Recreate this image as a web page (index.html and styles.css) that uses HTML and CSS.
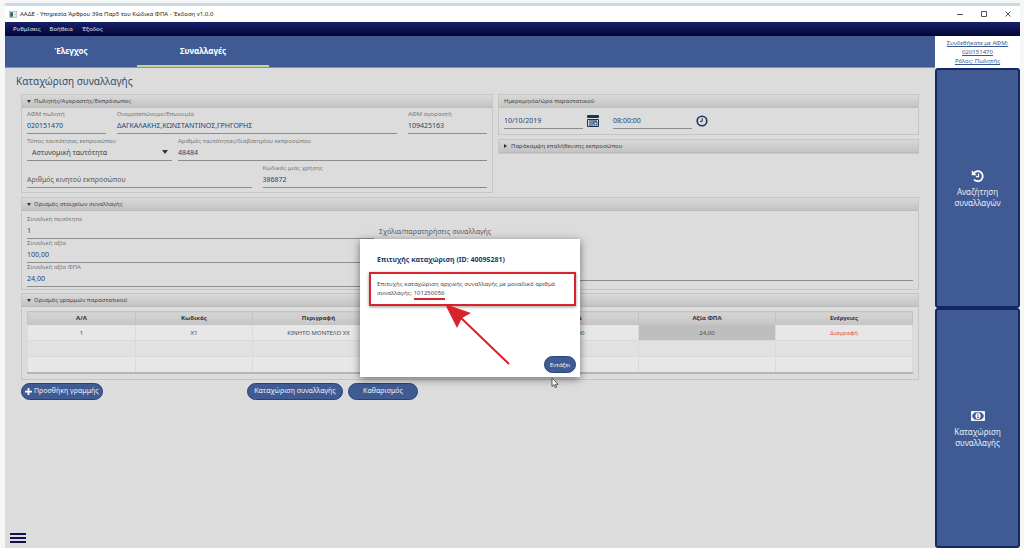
FILE: index.html
```html
<!DOCTYPE html>
<html lang="el">
<head>
<meta charset="utf-8">
<meta name="viewport" content="width=device-width, initial-scale=1">
<title>ΑΑΔΕ - Υπηρεσία Άρθρου 39α</title>
<link rel="stylesheet" href="styles.css">
</head>
<body>
<div class="window">
  <header class="titlebar">
    <svg class="app-icon" viewBox="0 0 14 12" aria-hidden="true"><rect x=".5" y=".5" width="13" height="11" fill="#eef3f4" stroke="#9aa9b2"/><rect x="2" y="2" width="5" height="8" fill="#2d6873"/><path d="M9 3h3M9 6h3M9 9h3" stroke="#a9b8be"/></svg>
    <span class="titlebar-text">ΑΑΔΕ - Υπηρεσία Άρθρου 39α Παρ5 του Κώδικα ΦΠΑ - Έκδοση v1.0.0</span>
    <button class="win-btn" aria-label="Ελαχιστοποίηση"><svg viewBox="0 0 8 8"><path d="M1 4.500h6"/></svg></button>
    <button class="win-btn" aria-label="Μεγιστοποίηση"><svg viewBox="0 0 8 8"><path d="M1.500 1.500h5v5h-5z"/></svg></button>
    <button class="win-btn" aria-label="Κλείσιμο"><svg viewBox="0 0 8 8"><path d="M1.500 1.500l5 5M6.500 1.500l-5 5"/></svg></button>
  </header>
  <nav class="menubar">
    <button>Ρυθμίσεις</button>
    <button>Βοήθεια</button>
    <button>Έξοδος</button>
  </nav>
  <div class="layout">
    <div class="workspace">
      <nav class="tabs">
        <button class="tab">Έλεγχος</button>
        <button class="tab tab-active">Συναλλαγές</button>
      </nav>
      <main class="main">
        <h1 class="page-title">Καταχώριση συναλλαγής</h1>
        <div class="panels">
          <div class="top-panels">
            <details class="panel" open>
              <summary class="panel-head">Πωλητής/Αγοραστής/Εκπρόσωπος</summary>
              <div class="panel-body party">
                <div class="row row-names">
                  <label class="field"><span>ΑΦΜ πωλητή</span><input type="text" value="020151470"></label>
                  <label class="field"><span>Ονοματεπώνυμο/Επωνυμία</span><input type="text" value="ΔΑΓΚΑΛΑΚΗΣ,ΚΩΝΣΤΑΝΤΙΝΟΣ,ΓΡΗΓΟΡΗΣ"></label>
                  <label class="field"><span>ΑΦΜ αγοραστή</span><input type="text" value="109425163"></label>
                </div>
                <div class="row row-identity">
                  <label class="field field-select"><span>Τύπος ταυτότητας εκπροσώπου</span><select><option>Αστυνομική ταυτότητα</option></select></label>
                  <label class="field"><span>Αριθμός ταυτότητας/διαβατηρίου εκπροσώπου</span><input type="text" value="48484"></label>
                </div>
                <div class="row row-phone">
                  <label class="field"><span></span><input type="text" aria-label="Αριθμός κινητού εκπροσώπου" placeholder="Αριθμός κινητού εκπροσώπου"></label>
                  <label class="field"><span>Κωδικός μιας χρήσης</span><input type="text" value="386872"></label>
                </div>
              </div>
            </details>
            <div class="side-panels">
              <section class="panel">
                <h2 class="panel-head">Ημερομηνία/ώρα παραστατικού</h2>
                <div class="panel-body datetime">
                  <input class="line-input" type="text" aria-label="Ημερομηνία" value="10/10/2019">
                  <button class="icon-btn" aria-label="Ημερολόγιο"><svg viewBox="0 0 12 12"><rect x="0" y="0" width="12" height="3" rx="1" fill="#17365c"/><path d="M.5 4.500h11v7H.500z" fill="#dcdcdc" stroke="#17365c"/><path d="M2 6h8M2 8h5M2 10h4" stroke="#17365c"/><rect x="7" y="7" width="3" height="3" fill="none" stroke="#17365c" stroke-width=".8"/></svg></button>
                  <input class="line-input" type="text" aria-label="Ώρα" value="08:00:00">
                  <button class="icon-btn" aria-label="Ρολόι"><svg viewBox="0 0 12 12"><circle cx="6" cy="6" r="4.800" fill="none" stroke="#17365c" stroke-width="1.600"/><path d="M6.200 3.200v3.200H4" fill="none" stroke="#17365c"/></svg></button>
                </div>
              </section>
              <details class="panel">
                <summary class="panel-head">Παράκαμψη επαλήθευσης εκπροσώπου</summary>
              </details>
            </div>
          </div>
          <details class="panel" open>
            <summary class="panel-head">Ορισμός στοιχείων συναλλαγής</summary>
            <div class="panel-body amounts">
              <div class="amount-fields">
                <label class="field"><span>Συνολική ποσότητα</span><input type="text" value="1"></label>
                <label class="field"><span>Συνολική αξία</span><input type="text" value="100,00"></label>
                <label class="field"><span>Συνολική αξία ΦΠΑ</span><input type="text" value="24,00"></label>
              </div>
              <textarea class="notes" aria-label="Σχόλια/παρατηρήσεις συναλλαγής" placeholder="Σχόλια/παρατηρήσεις συναλλαγής"></textarea>
            </div>
          </details>
          <details class="panel" open>
            <summary class="panel-head">Ορισμός γραμμών παραστατικού</summary>
            <div class="panel-body lines-body">
              <table class="lines">
                <colgroup><col class="col-no"><col class="col-code"><col class="col-desc"><col class="col-qty"><col class="col-value"><col class="col-vat"><col class="col-actions"></colgroup>
                <thead><tr><th>Α/Α</th><th>Κωδικός</th><th>Περιγραφή</th><th>Ποσότητα</th><th>Αξία</th><th>Αξία ΦΠΑ</th><th>Ενέργειες</th></tr></thead>
                <tbody>
                  <tr><td>1</td><td>Χ1</td><td>ΚΙΝΗΤΟ ΜΟΝΤΕΛΟ ΧΧ</td><td>1</td><td>100,00</td><td class="selected">24,00</td><td><a class="delete" href="#">Διαγραφή</a></td></tr>
                  <tr><td></td><td></td><td></td><td></td><td></td><td></td><td></td></tr>
                  <tr><td></td><td></td><td></td><td></td><td></td><td></td><td></td></tr>
                </tbody>
              </table>
            </div>
          </details>
        </div>
        <div class="actions">
          <button class="pill pill-add"><svg class="plus" viewBox="0 0 8 8"><path d="M4 0v8M0 4h8"/></svg>Προσθήκη γραμμής</button>
          <div class="actions-center">
            <button class="pill pill-wide">Καταχώριση συναλλαγής</button>
            <button class="pill pill-clear">Καθαρισμός</button>
          </div>
        </div>
        <button class="burger" aria-label="Μενού"><i></i><i></i><i></i></button>
        <div class="overlay">
          <div class="modal" role="dialog" aria-labelledby="dialog-title">
            <h2 class="modal-title" id="dialog-title">Επιτυχής καταχώριση (ID: 40095281)</h2>
            <p class="modal-text">Επιτυχής καταχώριση αρχικής συναλλαγής με μοναδικό αριθμό συναλλαγής: <span class="number">101250056</span></p>
            <button class="pill modal-ok">Εντάξει</button>
            <svg class="arrow" viewBox="0 0 66 62" aria-hidden="true"><path d="M14 12L64 60" stroke="#d8222c" stroke-width="2"/><path d="M0 0l26 9-9 5-5 10z" fill="#d8222c"/></svg>
            <svg class="pointer" viewBox="0 0 8 12" aria-hidden="true"><path d="M1 1v8.500l2-1.800 1.300 3 1.300-.6L4.300 7.300H7z" fill="#fff" stroke="#333" stroke-width=".8"/></svg>
          </div>
        </div>
      </main>
    </div>
    <aside class="sidebar">
      <a class="user" href="#">Συνδεθήκατε με ΑΦΜ: 020151470<br>Ρόλος: Πωλητής</a>
      <button class="side-btn"><svg viewBox="0 0 14 14"><path d="M2.800 4.200A5 5 0 1 1 3 10.500" fill="none" stroke="#fff" stroke-width="1.800"/><path d="M.8 1.200v5h5z" fill="#fff"/><path d="M7.500 4.500v3.200H5" fill="none" stroke="#fff" stroke-width="1.200"/></svg><span>Αναζήτηση συναλλαγών</span></button>
      <button class="side-btn"><svg viewBox="0 0 14 14"><rect x=".7" y="2.700" width="12.600" height="8.600" fill="none" stroke="#fff" stroke-width="1.200"/><path d="M1 3h3L1 6zM13 3v3l-3-3zM1 11V8l3 3zM13 11h-3l3-3z" fill="#fff"/><ellipse cx="7" cy="7" rx="2.600" ry="3" fill="#fff"/><path d="M6.200 5.800L7 5.300v3.300M6 8.600h2" fill="none" stroke="#405b94" stroke-width=".8"/></svg><span>Καταχώριση συναλλαγής</span></button>
    </aside>
  </div>
</div>
</body>
</html>
```
FILE: styles.css
```css
:root {
  --blue: #405b94;
  --text-blue: #27446f;
  --grey: #dcdcdc;
  --line: #8c8e8d;
  --red: #d8222c;
}
* { box-sizing: border-box; }
body {
  margin: 0;
  background: #f7f7f7;
  font-family: "Noto Sans", "Open Sans", sans-serif;
  font-size: 7px;
  line-height: 10px;
  color: #4b4b4b;
}
button, input, select, textarea {
  font: inherit;
  color: inherit;
  margin: 0;
  padding: 0;
  border: 0;
  border-radius: 0;
  background: none;
}
h1, h2, p { margin: 0; }
svg { display: block; }
.window {
  display: flex;
  flex-direction: column;
  min-height: 100vh;
  padding: 3px 4px 0 5px;
}
.titlebar {
  display: flex;
  align-items: center;
  height: 19px;
  border-top: 3px solid #c9dbe5;
  padding-left: 4px;
  background: #fff;
  color: #222;
  font-size: 6px;
}
.app-icon { width: 8px; height: 7px; margin-right: 3px; }
.titlebar-text { flex: 1; }
.win-btn { width: 24px; height: 12px; display: grid; place-items: center; }
.win-btn svg { width: 8px; height: 8px; fill: none; stroke: #555; stroke-width: 1; }
.menubar {
  display: flex;
  gap: 9px;
  height: 14px;
  padding-left: 8px;
  background: linear-gradient(#17216c, #020535);
  color: #dfe2ee;
  font-size: 6px;
}
.layout { flex: 1; display: flex; }
.workspace { flex: 1; min-width: 0; display: flex; flex-direction: column; }
.tabs {
  display: flex;
  height: 32px;
  background: var(--blue);
  border-bottom: 1px solid #8192b8;
}
.tab {
  width: 132px;
  border-bottom: 2px solid transparent;
  color: #fff;
  font-size: 8px;
  font-weight: 700;
}
.tab-active { border-color: #c3d592; }
.main {
  position: relative;
  flex: 1;
  display: flex;
  flex-direction: column;
  padding: 4px 16px 5px 5px;
  background: var(--grey);
}
.page-title {
  padding-left: 6px;
  color: #344b6c;
  font-size: 10px;
  font-weight: 400;
  line-height: 18px;
}
.panels { display: flex; flex-direction: column; gap: 3px; padding: 4px 0 0 11px; }
.top-panels { display: grid; grid-template-columns: 472fr 421fr; gap: 5px; align-items: start; padding-bottom: 1px; }
.side-panels { display: grid; gap: 4px; }
.panel { border: 1px solid #c5c5c5; }
.panel-head {
  display: flex;
  align-items: center;
  gap: 3px;
  height: 13px;
  padding-left: 5px;
  border-bottom: 1px solid #bbb;
  background: linear-gradient(#d9d9d9, #c3c3c3);
  color: #454545;
  font-size: 6px;
  font-weight: 400;
  list-style: none;
}
summary.panel-head::before {
  content: "";
  border: 2px solid transparent;
  border-left: 3px solid #333;
  border-right: 0;
  margin-right: 1px;
}
details[open] > summary.panel-head::before {
  border: 2px solid transparent;
  border-top: 3px solid #333;
  border-bottom: 0;
  margin-right: 0;
}
.panel-body { padding: 2px 5px 4px; }
.party { display: grid; gap: 3px; }
.row { display: grid; gap: 11px; }
.row-names { grid-template-columns: 79fr 280fr 79fr; }
.row-identity { grid-template-columns: 145fr 309fr; gap: 6px; }
.row-phone { grid-template-columns: 1fr 1fr; }
.field {
  display: flex;
  flex-direction: column;
  height: 24px;
  min-width: 0;
  border-bottom: 1px solid var(--line);
}
.field > span { height: 9px; font-size: 6px; line-height: 9px; color: #777; white-space: nowrap; }
.field input, .field select { width: 100%; height: 13px; color: var(--text-blue); }
.field ::placeholder, .notes::placeholder { color: #5a5a5a; opacity: 1; }
.field-select { position: relative; }
.field-select select { appearance: none; padding-left: 5px; }
.field.field-select select { color: #3f3f3f; }
.field-select::after {
  content: "";
  position: absolute;
  right: 4px;
  bottom: 6px;
  border: 3px solid transparent;
  border-top: 4px solid #333;
  border-bottom: 0;
}
.datetime { display: flex; align-items: center; padding: 4px 5px 5px; }
.line-input { width: 79px; height: 17px; border-bottom: 1px solid var(--line); color: var(--text-blue); }
.icon-btn { margin: 0 14px 0 4px; }
.icon-btn svg { width: 12px; height: 12px; }
.amounts { display: grid; grid-template-columns: 347fr 534fr; gap: 5px; padding: 4px 5px 2px; }
.notes {
  height: 58px;
  margin-top: 8px;
  padding-top: 4px;
  border-bottom: 1px solid var(--line);
  resize: none;
}
.lines-body { padding: 4px 5px 5px; }
.lines {
  width: 100%;
  table-layout: fixed;
  border-collapse: collapse;
  border: 1px solid #b5b5b5;
  border-bottom-width: 2px;
  font-size: 6px;
  text-align: center;
}
.col-no { width: 108px; }
.col-code { width: 117px; }
.col-desc { width: 132px; }
.col-qty, .col-value { width: 127px; }
.lines th { height: 13px; padding: 0; border: 1px solid #c3c3c3; background: linear-gradient(#d5d5d5, #c6c6c6); color: #333; line-height: 10px; }
.lines td { height: 16px; padding: 0; border: 1px solid #d9d9d9; background: #e7e7e7; }
.lines tr:nth-child(2) td { background: #e1e1e1; }
.lines td.selected { background: #bebebe; }
.delete { color: #e8484b; text-decoration: none; }
.actions {
  display: grid;
  grid-template-columns: 226fr 672fr;
  padding: 3px 0 0 11px;
}
.actions > .pill { justify-self: start; }
.actions-center { display: flex; gap: 5px; }
.pill {
  display: flex;
  align-items: center;
  justify-content: center;
  gap: 2px;
  height: 17px;
  padding: 0 5px;
  border: 1px solid #27427a;
  border-radius: 9px;
  background: var(--blue);
  color: #eef1f7;
  white-space: nowrap;
}
.pill-add { padding: 0 3px; }
.pill-wide { width: 96px; }
.pill-clear { width: 70px; }
.plus { width: 7px; height: 7px; stroke: #fff; stroke-width: 2; }
.burger { display: grid; gap: 2px; width: 16px; margin-top: auto; }
.burger i { height: 2px; background: #10104e; }
.overlay {
  position: absolute;
  inset: 0;
  display: flex;
  align-items: center;
  justify-content: center;
}
.modal {
  position: relative;
  display: flex;
  flex-direction: column;
  width: 220px;
  min-height: 138px;
  padding: 15px 4px 4px 9px;
  background: #fff;
  box-shadow: 0 2px 8px rgba(0, 0, 0, .5);
}
.modal-title { padding-left: 8px; color: #1c3a6e; font-size: 7px; line-height: 12px; }
.modal-text {
  margin-top: 6px;
  padding: 6px;
  border: 2px solid var(--red);
  color: #4c4c4c;
  font-size: 6px;
  line-height: 9px;
  min-height: 34px;
  box-shadow: 0 1px 3px rgba(0, 0, 0, .4);
}
.number { padding-bottom: 1px; border-bottom: 2px solid var(--red); }
.modal-ok { align-self: flex-end; width: 32px; margin-top: auto; font-size: 6px; }
.arrow { position: absolute; left: 85px; top: 65px; width: 66px; height: 62px; }
.pointer { position: absolute; left: 191px; top: 138px; width: 8px; height: 12px; }
.sidebar { width: 85px; display: flex; flex-direction: column; }
.user {
  display: block;
  height: 32px;
  padding: 3px 5px 0;
  background: #fff;
  color: #37588f;
  font-size: 6px;
  line-height: 9px;
  text-align: center;
}
.side-btn {
  flex: 1;
  display: flex;
  flex-direction: column;
  align-items: center;
  justify-content: center;
  gap: 3px;
  padding: 0 12px;
  border: 2px solid #142765;
  border-radius: 3px;
  background: var(--blue);
  color: #e8ecf4;
  font-size: 8px;
  line-height: 11px;
}
.side-btn svg { width: 14px; height: 14px; }
```
